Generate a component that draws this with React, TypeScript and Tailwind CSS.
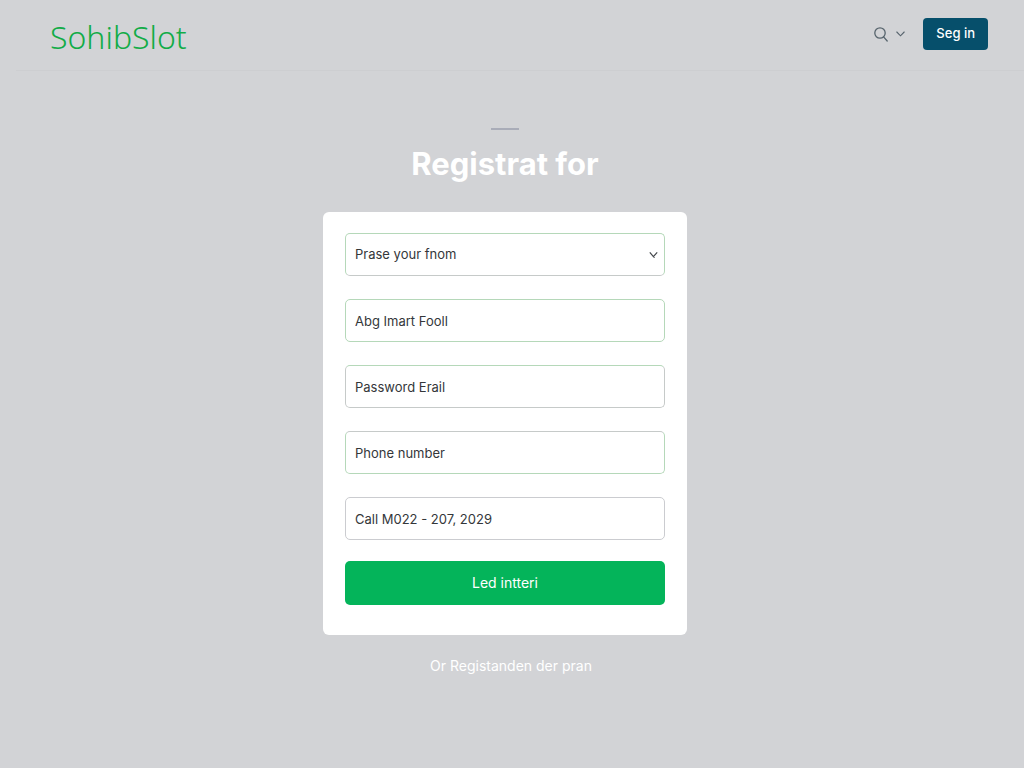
import React from 'react';

const FIELDS = [
  { key: 'email', label: 'Abg Imart Fooll', type: 'text', border: 'border-[#b5d8b9]' },
  { key: 'password', label: 'Password Erail', type: 'text', border: 'border-[#c6cac9] border-t-[#b5d8b9]' },
  { key: 'phone', label: 'Phone number', type: 'tel', border: 'border-[#b5d8b9] border-t-[#c6cac9]' },
  { key: 'call', label: 'Call M022 - 207, 2029', type: 'text', border: 'border-[#cbccd0]' },
];

const Header: React.FC = () => (
  <header className="ml-4 flex h-[71px] items-start justify-between border-b border-[#cdced1] pl-[34px] pr-9 pt-[18px]">
    <a href="#" className="font-['Noto_Sans',sans-serif] text-[32px] font-light leading-[38px] text-[#12ac48]">
      SohibSlot
    </a>
    <div className="flex items-center">
      <button type="button" aria-label="Search" className="flex items-center gap-2 text-[#57646d]">
        <svg width="14" height="15" viewBox="0 0 14 15" fill="none" stroke="currentColor" strokeWidth="1.3" strokeLinecap="round">
          <circle cx="6" cy="6" r="5.2" />
          <path d="M9.6 9.8 13.2 14" />
        </svg>
        <svg width="9" height="6" viewBox="0 0 9 6" fill="none" stroke="currentColor" strokeWidth="1.1" strokeLinecap="round">
          <path d="m.8 1 3.7 3.8L8.2 1" />
        </svg>
      </button>
      <button type="button" className="ml-[18px] h-8 rounded bg-[#064f6b] px-[13px] text-[13px] font-medium text-white">
        Seg in
      </button>
    </div>
  </header>
);

const App: React.FC = () => {
  return (
    <div className="min-h-screen bg-[#d2d3d6] font-['Inter',sans-serif]">
      <Header />
      <main className="flex flex-col items-center pb-10 pr-[14px] pt-[57px]">
        <div className="h-0.5 w-7 bg-[#a9acb8]" />
        <h1 className="mt-[14px] text-[31px] font-bold leading-10 text-white">Registrat for</h1>

        <form className="mt-7 w-full max-w-[364px] rounded-md bg-white px-[22px] pb-[30px] pt-[21px]">
          <div className="flex flex-col gap-[23px]">
            <div className="relative">
              <select
                aria-label="Prase your fnom"
                className="block h-[43px] w-full appearance-none rounded-[5px] border border-[#b5d8b9] border-b-[#c6cac9] bg-white px-[9px] text-[13px] text-[#34373a] outline-none"
              >
                <option>Prase your fnom</option>
              </select>
              <svg className="pointer-events-none absolute right-[7px] top-[18px] text-[#44484c]" width="9" height="8" viewBox="0 0 9 8" fill="none" stroke="currentColor" strokeWidth="1.2">
                <path d="m.8 1.4 3.6 4.2L8.2 1.4M4.4 5.6l1.2 1" />
              </svg>
            </div>
            {FIELDS.map(field => (
              <input
                key={field.key}
                type={field.type}
                name={field.key}
                aria-label={field.label}
                placeholder={field.label}
                className={`block h-[43px] w-full rounded-[5px] border bg-white px-[9px] text-[13px] text-[#34373a] outline-none placeholder:text-[#34373a] ${field.border}`}
              />
            ))}
          </div>
          <button type="button" className="mt-[21px] h-11 w-full rounded-[5px] bg-[#04b45a] text-sm text-white">
            Led intteri
          </button>
        </form>

        <a href="#" className="ml-3 mt-[19px] text-sm leading-6 text-white">Or Registanden der pran</a>
      </main>
    </div>
  );
};

export default App;
